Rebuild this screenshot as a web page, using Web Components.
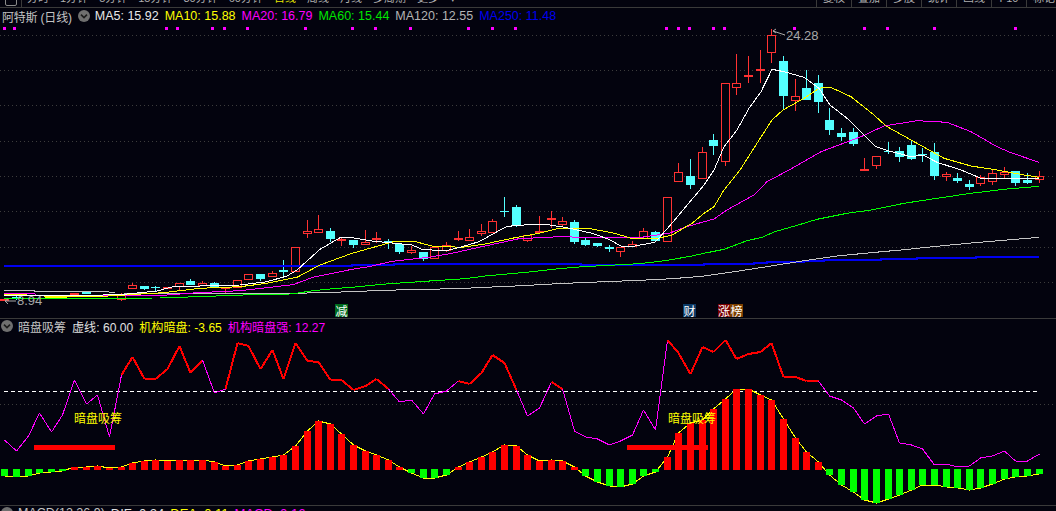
<!DOCTYPE html>
<html lang="zh">
<head>
<meta charset="utf-8">
<title>阿特斯</title>
<style>
    html, body { margin: 0; height: 100%; overflow: hidden; background: #03030e; }
</style>
</head>
<body>
<stock-terminal>
    <tool-bar slot="toolbar">
        <tool-tab slot="left">分时</tool-tab>
        <tool-tab slot="left">1分钟</tool-tab>
        <tool-tab slot="left">5分钟</tool-tab>
        <tool-tab slot="left">15分钟</tool-tab>
        <tool-tab slot="left">30分钟</tool-tab>
        <tool-tab slot="left">60分钟</tool-tab>
        <tool-tab slot="left" active>日线</tool-tab>
        <tool-tab slot="left">周线</tool-tab>
        <tool-tab slot="left">月线</tool-tab>
        <tool-tab slot="left">多周期</tool-tab>
        <tool-tab slot="left">更多</tool-tab>
        <tool-tab slot="left">▾</tool-tab>
        <tool-button slot="right">复权</tool-button>
        <tool-button slot="right">叠加</tool-button>
        <tool-button slot="right">多股</tool-button>
        <tool-button slot="right">统计</tool-button>
        <tool-button slot="right">画线</tool-button>
        <tool-button slot="right">F10</tool-button>
        <tool-button slot="right">标记</tool-button>
    </tool-bar>

    <legend-row slot="main">
        <span class="title">阿特斯 (日线)</span>
        <ma-value color="#e8e8e8">MA5: 15.92</ma-value>
        <ma-value color="#ffff00">MA10: 15.88</ma-value>
        <ma-value color="#ff00ff">MA20: 16.79</ma-value>
        <ma-value color="#00e600">MA60: 15.44</ma-value>
        <ma-value color="#b4b4b4">MA120: 12.55</ma-value>
        <ma-value color="#0000f0">MA250: 11.48</ma-value>
    </legend-row>
    <kline-chart slot="main"></kline-chart>

    <legend-row slot="sub" lower>
        <span class="title">暗盘吸筹</span>
        <ma-value color="#e0e0e0">虚线: 60.00</ma-value>
        <ma-value color="#ffff00">机构暗盘: -3.65</ma-value>
        <ma-value color="#ff00ff">机构暗盘强: 12.27</ma-value>
    </legend-row>
    <flow-chart slot="sub"></flow-chart>

    <legend-row slot="macd" lower wide>
        <span class="title">MACD(12,26,9)</span>
        <ma-value color="#e0e0e0">DIF: 0.24</ma-value>
        <ma-value color="#ffff00">DEA: 0.11</ma-value>
        <ma-value color="#ff00ff">MACD: 0.16</ma-value>
    </legend-row>
</stock-terminal>

<script>
const BG = '#03030e';
const FONT = '"Liberation Sans", "Noto Sans CJK SC", sans-serif';
const RED = '#ff3232';
const CYAN = '#54ffff';

// x position of bar i on both charts
const barX = (i) => Math.round(4.4 + 11.62 * i) + 0.5;

const polyline = (pts, color, width = 1, extra = '') =>
    `<polyline points="${pts.map((p) => p.join(',')).join(' ')}" fill="none" stroke="${color}" stroke-width="${width}" shape-rendering="crispEdges" ${extra}/>`;

// <stock-terminal> page frame, three stacked panels
class StockTerminal extends HTMLElement {
    constructor() {
        super();
        this.attachShadow({ mode: 'open' });
        this.shadowRoot.innerHTML = `
            <style>
                :host {
                    display: flex;
                    flex-direction: column;
                    height: 511px;
                    overflow: hidden;
                    background: ${BG};
                    font-family: ${FONT};
                }
                .panel { border-top: 1px solid #3a3a3a; flex: none; }
            </style>
            <slot name="toolbar"></slot>
            <div class="panel"><slot name="main"></slot></div>
            <div class="panel"><slot name="sub"></slot></div>
            <div class="panel"><slot name="macd"></slot></div>
        `;
    }
}

// <tool-bar> period tabs on the left, buttons on the right; cut off by the window top
class ToolBar extends HTMLElement {
    constructor() {
        super();
        this.attachShadow({ mode: 'open' });
        this.shadowRoot.innerHTML = `
            <style>
                :host {
                    display: flex;
                    height: 7px;
                    overflow: hidden;
                    flex: none;
                }
                .icon {
                    flex: none;
                    width: 22px;
                    box-sizing: border-box;
                    border-right: 1px solid #3a3a3a;
                    position: relative;
                    overflow: hidden;
                }
                .icon i {
                    display: block;
                    width: 10px;
                    height: 8px;
                    margin: -4px 0 0 5px;
                    border: 1px solid #8a8a8a;
                    border-radius: 2px;
                }
                .left {
                    flex: 1;
                    display: flex;
                    align-items: flex-end;
                    gap: 11px;
                    padding-left: 5px;
                }
                .right {
                    flex: none;
                    width: 240px;
                    display: flex;
                    overflow: hidden;
                }
            </style>
            <div class="icon"><i></i></div>
            <div class="left"><slot name="left"></slot></div>
            <div class="right"><slot name="right"></slot></div>
        `;
    }
}

class ToolTab extends HTMLElement {
    constructor() {
        super();
        this.attachShadow({ mode: 'open' });
        this.shadowRoot.innerHTML = `
            <style>
                :host {
                    display: block;
                    flex: none;
                    font-size: 11px;
                    line-height: 12px;
                    color: #b0b0b0;
                    padding-bottom: 3px;
                }
                :host([active]) { color: #e6e600; }
            </style>
            <slot></slot>
        `;
    }
}

class ToolButton extends HTMLElement {
    constructor() {
        super();
        this.attachShadow({ mode: 'open' });
        this.shadowRoot.innerHTML = `
            <style>
                :host {
                    display: flex;
                    flex: none;
                    width: 35px;
                    box-sizing: border-box;
                    height: 7px;
                    justify-content: center;
                    align-items: flex-end;
                    border-left: 1px solid #3a3a3a;
                    font-size: 11px;
                    color: #b0b0b0;
                }
                span { display: block; line-height: 12px; padding-bottom: 3px; flex: none; }
            </style>
            <span><slot></slot></span>
        `;
    }
}

// <legend-row> panel title, dropdown dot and indicator values.
// the lower rows have the dot in front of the title, the main row behind it
class LegendRow extends HTMLElement {
    constructor() {
        super();
        this.attachShadow({ mode: 'open' });
        const lower = this.hasAttribute('lower');
        const wide = this.hasAttribute('wide');
        const dot = `
            <svg class="dot" width="12" height="12" viewBox="0 0 12 12">
                <circle cx="6" cy="6" r="6" fill="#6f6f6f"/>
                <path d="M3 4.6 L6 7.6 L9 4.6" fill="none" stroke="#1c1c1c" stroke-width="1.6"/>
            </svg>`;
        const title = `<slot name="title"></slot>`;
        this.shadowRoot.innerHTML = `
            <style>
                :host {
                    display: flex;
                    align-items: center;
                    height: ${lower ? 14 : 16}px;
                    gap: 6px;
                    font-size: ${wide ? 13 : lower ? 12.1 : 12.5}px;
                    padding-left: ${lower ? 1 : 2}px;
                    ${lower ? 'padding-bottom: 2px;' : ''}
                    white-space: nowrap;
                    color: #c4c4c4;
                }
                ::slotted(.title) { font-size: ${wide ? 12.5 : 12}px; letter-spacing: ${lower ? 0 : -0.2}px; }
                .dot { flex: none; margin-right: -1px; }
            </style>
            ${lower ? dot + title : title + dot}
            <slot></slot>
        `;
        [...this.children].forEach((c) => {
            if (c.classList.contains('title')) c.slot = 'title';
        });
    }
}

class MaValue extends HTMLElement {
    constructor() {
        super();
        this.attachShadow({ mode: 'open' });
        this.shadowRoot.innerHTML = `
            <style>
                :host { display: block; flex: none; color: ${this.getAttribute('color')}; }
            </style>
            <slot></slot>
        `;
    }
}

// [bar, kind, bodyTop, bodyBottom, wickTop, wickBottom]
const CANDLES = [
    [0,'r',298.5,300.5,298,301],[1,'c',297,298,295,300],[6,'r',293,295,293,295],[7,'c',291.5,293.5,291,294],
    [9,'c',294,295.5,294,296],[10,'r',294,300,293,301],
    [11,'r',285,289,283,289],[12,'c',286,289,286,290],[13,'c',287,288,286,291],[14,'r',287,289,287,289],
    [15,'r',283,287,283,291],[16,'c',281,285,279,285],[17,'r',283,286,281,286],[18,'c',283,287,282,287],
    [19,'r',287,289,287,293],[20,'r',280,288,280,288],[21,'r',274,280,274,280],[22,'c',274,279,274,281],
    [23,'r',273,277,271,277],[24,'c',270,272,260,276],[25,'r',247,272,247,272],[26,'r',231,233.5,220,238],
    [27,'r',229,232.5,215,232.5],[28,'c',231,239,228,242],[29,'r',239,241,237,246],[30,'c',240,245,240,248],
    [31,'r',242,245,230,245],[32,'r',238,239,232,243],[33,'c',241,242,239,249],[34,'c',244,252,243,254],
    [35,'r',250,253,246,254],[36,'c',252,259,252,261],[37,'r',247,259,247,259],[38,'r',245,251,242,252],
    [39,'r',238,239,231,241],[40,'r',237,241,229,241],[41,'r',231,234,224,236],[42,'r',221,233,219,233],
    [43,'c',211,212,197,217],[44,'c',207,225,205,227],[45,'r',235,241,235,242],[46,'r',231,232,216,232],
    [47,'r',218,220,211,228],[48,'r',221,225,217,227],[49,'c',222,242,220,244],[50,'c',240,245,238,246],
    [51,'c',243,246,243,247],[52,'c',247,249,245,252],[53,'r',247,252,247,257],[54,'r',244,247,241,247],
    [55,'r',231,239,228,239],[56,'c',232,241,231,241],[57,'r',197,242,197,242],[58,'r',172,182,163,182],
    [59,'c',176,185,159,189],[60,'r',152,179,147,179],[61,'c',140,146,134,155],[62,'r',83,162,83,166],
    [63,'r',83,88,54,95],[64,'r',75,77,56,83],[65,'r',69,71,50,83],[66,'r',35,53,29,63],
    [67,'c',61,96,56,110],[68,'r',96,101,79,111],[69,'c',88,100,70,100],[70,'c',83,102,75,113],
    [71,'c',120,130,108,135],[72,'c',133,137,128,141],[73,'c',132,144,128,146],[74,'r',169,171,158,171],
    [75,'r',156,166,156,169],[76,'c',151,152,142,154],[77,'c',151,157,147,162],[78,'c',145,159,140,160],
    [79,'c',154,155,148,162],[80,'c',152,176,143,180],[81,'r',174,177,172,181],[82,'c',178,181,173,183],
    [83,'c',184,187,180,190],[84,'r',177,184,175,186],[85,'r',173,182,170,185],[86,'r',172,175,167,178],
    [87,'c',171,183,171,186],[88,'c',180,183,173,184],[89,'r',176,180,171,183],
];

const MA5 = [[4,296],[34,295.5],[46,296],[70,295],[103,295],[120,294.5],[127,294],[157,291],[173,286.7],[240,285],[267,281.7],[287,276],[297,270],[320,249.3],[340,237.7],[352,237.7],[372,241],[412,245],[422,249.3],[445,251],[462,246.7],[479,241.7],[505,227.3],[515,225.3],[545,224.3],[565,227.3],[592,233.3],[609,239.3],[622,246.7],[635,246],[655,242.3],[669,226.7],[704,185],[714,170],[724,146.7],[737,130],[749,108.3],[761,91.7],[772,69.3],[784,71.7],[804,77.3],[819,88.3],[830,105],[847,118.3],[864,135],[876,146.7],[888,150.7],[911,156.7],[923,155],[937,162.3],[961,170],[981,178.3],[1039,178.7]];
const MA10 = [[4,294.7],[22,294.7],[44,296],[70,297],[100,296.5],[163,292.7],[200,288.3],[240,286.7],[267,283.3],[297,277.3],[320,265],[352,253.3],[372,247.7],[395,241.3],[414,241.3],[432,246],[462,247.3],[485,244],[512,238.3],[539,233.3],[559,228.3],[592,229],[615,233.3],[630,238],[655,239],[672,235],[692,223.3],[704,213.3],[714,206.7],[724,190],[740,170],[757,143.3],[772,120],[783,110],[804,98.3],[819,88.3],[830,87],[851,96.7],[874,115],[886,126],[911,140],[944,158.3],[971,166],[997,170],[1024,175],[1039,177.3]];
const MA20 = [[4,293.3],[34,293.3],[36,295],[100,295],[167,295],[197,292.7],[240,290.7],[293,284.7],[313,277.3],[352,269.3],[369,266.7],[392,261.3],[429,257.3],[452,253.3],[485,246],[519,238.7],[559,236.7],[585,237.3],[639,237.7],[652,235.7],[669,233.3],[685,227.3],[704,221.7],[714,219],[727,210],[754,195],[767,181.7],[789,170],[821,151.7],[861,136.7],[884,126],[917,120.7],[947,122.3],[971,131.7],[997,146.7],[1011,152.7],[1039,162.3]];
const MA60 = [[4,298.3],[160,298],[197,296.7],[243,295],[290,294],[300,292.7],[313,290.7],[333,288.7],[352,287.3],[382,284.3],[419,281.7],[465,278.7],[485,276],[532,271.7],[559,268.7],[579,267],[602,265.7],[639,263.7],[665,260.7],[692,256],[704,253.3],[724,249.3],[747,240.7],[762,237.3],[774,232],[804,223.3],[817,219.3],[847,213.3],[871,210],[904,203.3],[937,198.3],[971,193.3],[1004,189.3],[1039,186.3]];
const MA120 = [[4,290.3],[34,290.3],[34,291.3],[104,291.3],[115,293],[297,293.3],[352,291.7],[382,290.3],[429,289.3],[465,288.3],[499,286.7],[522,285.7],[557,283.7],[580,282.7],[615,281.3],[639,280.3],[662,279.3],[685,277.7],[704,276],[737,271.3],[771,266],[804,260.7],[837,256],[871,252.7],[904,249.7],[937,246.3],[971,243],[1004,240.3],[1039,237.3]];
// blue average moves in flat steps
const MA250 = [[4,266],[352,266],[352,265],[394,265],[394,264],[581,264],[581,265],[704,265],[704,264],[754,264],[754,263],[767,263],[767,262],[804,262],[804,261],[824,261],[824,260],[881,260],[881,259],[917,259],[917,258],[976,258],[976,257],[1039,257]];

const DOTS = [3.7,14.3,166.3,177.3,212.3,224.3,247.3,305.3,352,375.3,410.3,468.3,492.3,515.3,666.3,678.3,689.3,713.3,724.3,794.3,864.3,887.3,934.3,1015.3];

// <kline-chart> candlesticks and moving averages, y 24 to 318 of the window
class KlineChart extends HTMLElement {
    constructor() {
        super();
        this.attachShadow({ mode: 'open' });

        const grid = [35, 70, 105, 141, 176, 211, 247, 282].map((y) =>
            `<line x1="0" x2="1056" y1="${y + 0.5}" y2="${y + 0.5}" stroke="#3c3c3c" stroke-dasharray="1 3" shape-rendering="crispEdges"/>`
        ).join('');

        const candles = CANDLES.map(([i, kind, top, bottom, wickTop, wickBottom]) => {
            const x = barX(i);
            const t = Math.round(top);
            const b = Math.round(bottom);
            const color = kind == 'r' ? RED : CYAN;
            let s = `<line x1="${x}" x2="${x}" y1="${Math.round(wickTop)}" y2="${Math.round(wickBottom)}" stroke="${color}" shape-rendering="crispEdges"/>`;
            if (kind == 'r') {
                s += `<rect x="${x - 4}" y="${t + 0.5}" width="8" height="${Math.max(b - t - 1, 1)}" fill="${BG}" stroke="${color}" shape-rendering="crispEdges"/>`;
            } else {
                s += `<rect x="${x - 4.5}" y="${t}" width="9" height="${Math.max(b - t, 1)}" fill="${color}" shape-rendering="crispEdges"/>`;
            }
            return s;
        }).join('');

        const dots = DOTS.map((x) =>
            `<rect x="${Math.round(x) - 1}" y="27" width="3" height="3" fill="#ff00ff"/>`
        ).join('');

        // first bars disappear under the bunched averages
        const band = [
            [45, 296, 22, 2, '#ffff00'], [70, 293, 9, 2, RED], [12, 294, 10, 1, '#ffffff'],
            [44, 295, 60, 2, '#ffffff'], [104, 295, 20, 1, '#ffff66'],
        ].map(([x, y, w, h, c]) => `<rect x="${x}" y="${y}" width="${w}" height="${h}" fill="${c}"/>`).join('');

        this.shadowRoot.innerHTML = `
            <style>
                :host {
                    display: block;
                    position: relative;
                    height: 294px;
                    font-family: ${FONT};
                }
                svg { display: block; }
                .label {
                    position: absolute;
                    font-size: 13px;
                    line-height: 14px;
                    color: #a8a8a8;
                }
                .tag {
                    position: absolute;
                    top: 280px;
                    width: 13px;
                    height: 13px;
                    font-size: 12px;
                    line-height: 13px;
                    text-align: center;
                    color: #fff;
                    font-family: "Noto Sans CJK SC", sans-serif;
                }
            </style>
            <svg width="1056" height="294" viewBox="0 24 1056 294">
                ${grid}${dots}${candles}${band}
                <g transform="translate(0 -0.5)">${polyline(MA250, '#0000f0', 2)}</g>
                ${polyline(MA120, '#c4c4c4', 1)}
                ${polyline(MA60, '#00ff00', 1)}
                ${polyline(MA20, '#ff00ff', 1)}
                ${polyline(MA10, '#ffff00', 1)}
                ${polyline(MA5, '#ffffff', 1)}
                <path d="M773 31 L785 35 M773 31 l3 -2 M773 31 l3 2" fill="none" stroke="#a8a8a8"/>
                <path d="M5 301 L16 301 M5 301 l3 -2 M5 301 l3 3" fill="none" stroke="#a8a8a8"/>
                <path d="M1052 12 L1056 17 L1052 22 L1048 17 Z" fill="none" stroke="#555"/>
            </svg>
            <span class="label" style="left:786px;top:5px">24.28</span>
            <span class="label" style="left:17px;top:270px">8.94</span>
            <span class="tag" style="left:335px;background:#006a1e">减</span>
            <span class="tag" style="left:683px;background:#0b3a66">财</span>
            <span class="tag" style="left:718px;background:#7a0000;width:12px">涨</span>
            <span class="tag" style="left:730px;background:#7c4000">榜</span>
        `;
    }
}

// y of the strength line per bar, zoom values of the reference
const STRENGTH = [440,451,436,413,432,415,380,404,395,437,375,357,379,379,369,346,373,360,393,389,343,346,369,350,379,343,361,362,380,380,390,386,379,389,402,400,414,394,391,381,384,373,355,363,390,416,408,382,389,431,437,439,445,441,435,410,430,340,353,374,347,352,340,359,354,352,343,377,377,381,381,396,400,408,424,416,414,443,445,449,465,464,467,466,458,456,451,461,461,454];

// top of red / bottom of green histogram bar, y of the window
const HIST = [476,477,476,473,472,471,467,467,466,468,467,463,461,460,461,460,460,460,462,466,465,461,459,457,455,446,431,421,424,434,445,451,455,460,467,473,478,478,475,467,462,457,452,445,446,455,461,460,461,467,476,482,486,487,484,476,472,457,433,423,420,409,399,389,389,395,400,419,438,452,462,475,485,492,500,503,499,495,490,485,485,487,488,490,488,484,479,477,476,474];

// <flow-chart> strength line over the histogram, y 335 to 505 of the window
class FlowChart extends HTMLElement {
    constructor() {
        super();
        this.attachShadow({ mode: 'open' });
        const LINE = 391;

        let strength = '';
        for (let i = 0; i < STRENGTH.length - 1; i++) {
            const above = STRENGTH[i] < LINE && STRENGTH[i + 1] < LINE;
            strength += polyline(
                [[barX(i), STRENGTH[i]], [barX(i + 1), STRENGTH[i + 1]]],
                above ? '#ff0000' : '#ff00ff',
                above ? 2 : 1
            );
        }

        const bars = HIST.map((y, i) => {
            const x = barX(i) - 3.5;
            return y < 469
                ? `<rect x="${x}" y="${y}" width="7" height="${470 - y}" fill="#ff0000"/>`
                : `<rect x="${x}" y="469" width="7" height="${y - 469}" fill="#00ff00"/>`;
        }).join('');

        this.shadowRoot.innerHTML = `
            <style>
                :host {
                    display: block;
                    position: relative;
                    height: 170px;
                    font-family: "Noto Sans CJK SC", sans-serif;
                }
                svg { display: block; }
                .mark {
                    position: absolute;
                    top: 76px;
                    font-size: 12px;
                    line-height: 14px;
                    color: #ffff00;
                }
            </style>
            <svg width="1056" height="170" viewBox="0 335 1056 170">
                <line x1="0" x2="1056" y1="404.5" y2="404.5" stroke="#3c3c3c" stroke-dasharray="1 3" shape-rendering="crispEdges"/>
                <line x1="4" x2="1039" y1="391" y2="391" stroke="#fff" stroke-dasharray="4 3" shape-rendering="crispEdges"/>
                ${strength}
                ${polyline(HIST.map((y, i) => [barX(i), y]), '#ffff00', 1)}
                ${bars}
                <rect x="34" y="445" width="81" height="5" fill="#ff0000"/>
                <rect x="627" y="445" width="81" height="5" fill="#ff0000"/>
            </svg>
            <span class="mark" style="left:74px">暗盘吸筹</span>
            <span class="mark" style="left:668px">暗盘吸筹</span>
        `;
    }
}

customElements.define('stock-terminal', StockTerminal);
customElements.define('tool-bar', ToolBar);
customElements.define('tool-tab', ToolTab);
customElements.define('tool-button', ToolButton);
customElements.define('legend-row', LegendRow);
customElements.define('ma-value', MaValue);
customElements.define('kline-chart', KlineChart);
customElements.define('flow-chart', FlowChart);
</script>
</body>
</html>
